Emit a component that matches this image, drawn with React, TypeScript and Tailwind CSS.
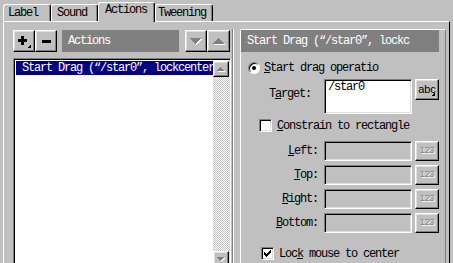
import React from "react";

const raised =
  "bg-[#c0c0c0] border border-t-white border-l-white border-r-black border-b-black shadow-[inset_-1px_-1px_0_#808080,inset_1px_1px_0_#dfdfdf]";
const sunken =
  "border border-t-[#808080] border-l-[#808080] border-r-white border-b-white shadow-[inset_1px_1px_0_#000,inset_-1px_-1px_0_#dfdfdf]";

function Tab({ label, className, active }: { label: string; className: string; active?: boolean }) {
  return (
    <div
      className={`relative bg-[#c0c0c0] border-t border-l border-r border-t-white border-l-white border-r-black rounded-t-[3px] shadow-[inset_-1px_0_0_#808080] leading-[13px] ${className} ${
        active ? "z-10 -mb-px h-[20px] pt-[1px]" : "h-[17px] pt-[2px]"
      }`}
    >
      {label}
    </div>
  );
}

function Arrow({ up, small }: { up?: boolean; small?: boolean }) {
  const w = small ? 7 : 11;
  const h = small ? 4 : 6;
  const d = up ? `M0 ${h}h${w}L${w / 2} 0z` : `M0 0h${w}L${w / 2} ${h}z`;
  return (
    <svg width={w + 1} height={h + 1} shapeRendering="crispEdges">
      <path d={d} fill="#fff" transform="translate(1,1)" />
      <path d={d} fill="#808080" />
    </svg>
  );
}

function Corner() {
  return (
    <svg width="4" height="4" className="absolute bottom-[3px] right-[3px]" shapeRendering="crispEdges">
      <path d="M4 0v4H0z" fill="#000" />
    </svg>
  );
}

function Check({ checked }: { checked?: boolean }) {
  return (
    <div className={`w-[13px] h-[13px] bg-white ${sunken} flex items-center justify-center shrink-0`}>
      {checked && (
        <svg width="7" height="7" shapeRendering="crispEdges">
          <path d="M0 2h1v1h1v1h1V3h1V2h1V1h1V0h1v3H6v1H5v1H4v1H3v1H2V6H1V5H0z" fill="#000" />
        </svg>
      )}
    </div>
  );
}

function FieldRow({ label, u }: { label: string; u: string }) {
  return (
    <div className="flex items-center h-[20px]">
      <div className="w-[77px] text-right">
        <u>{u}</u>
        {label}:
      </div>
      <div className={`ml-[6px] w-[88px] h-[20px] bg-[#c0c0c0] ${sunken}`} />
      <div
        className={`ml-[3px] w-[24px] h-[20px] ${raised} flex items-center justify-center font-['Liberation_Sans',sans-serif] text-[9px] tracking-[-0.3px] text-[#808080] [text-shadow:1px_1px_0_#fff]`}
      >
        123
      </div>
    </div>
  );
}

export default function App() {
  return (
    <div className="w-[453px] h-[263px] overflow-hidden bg-[#c0c0c0] flex flex-col font-['Liberation_Mono',monospace] text-[12px] tracking-[-1.2px] text-black">
      <div className="flex items-end h-[21px] pl-[3px] shrink-0">
        <Tab label="Label" className="w-[48px] pl-[4px]" />
        <Tab label="Sound" className="w-[47px] pl-[5px]" />
        <Tab label="Actions" className="w-[57px] pl-[6px]" active />
        <Tab label="Tweening" className="w-[58px] pl-[2px]" />
      </div>

      <div className="ml-[3px] w-[447px] flex-1 flex border-t border-l border-r border-t-white border-l-white border-r-black pt-[8px] pl-[9px]">
        {/* left pane */}
        <div className="flex flex-col w-[218px] shrink-0">
          <div className="flex h-[22px]">
            <div className={`relative w-[22px] ${raised} flex items-center justify-center`}>
              <svg width="9" height="9" className="-ml-[3px] -mt-[1px]" shapeRendering="crispEdges">
                <path d="M3 0h3v3h3v3H6v3H3V6H0V3h3z" fill="#000" />
              </svg>
              <Corner />
            </div>
            <div className={`w-[22px] ${raised} flex items-center justify-center`}>
              <div className="w-[9px] h-[3px] bg-black" />
            </div>
            <div className="ml-[5px] w-[117px] bg-[#808080] text-white pl-[6px] flex items-center">Actions</div>
            <div className={`ml-[6px] w-[22px] ${raised} flex items-center justify-center`}>
              <Arrow />
            </div>
            <div className={`w-[23px] ${raised} flex items-center justify-center`}>
              <Arrow up />
            </div>
          </div>

          <div className={`mt-[6px] h-[212px] w-[218px] bg-white ${sunken} p-[2px] pr-[1px] flex`}>
            <div className="flex-1 min-w-0 overflow-hidden">
              <div className="h-[14px] bg-[#000080] text-white pl-[6px] leading-[14px] whitespace-nowrap">
                Start Drag (“/star0”, lockcenter
              </div>
            </div>
            <div className="w-[16px] flex flex-col shrink-0">
              <div className={`h-[16px] ${raised} flex items-center justify-center`}>
                <Arrow up small />
              </div>
              <div className="flex-1 bg-[image:conic-gradient(#fff_0_25%,#c0c0c0_0_50%,#fff_0_75%,#c0c0c0_0)] bg-[length:2px_2px]" />
              <div className={`h-[16px] ${raised} flex items-center justify-center`}>
                <Arrow small />
              </div>
            </div>
          </div>
        </div>

        {/* splitter groove */}
        <div className="ml-[1px] -mt-[1px] w-[2px] border-l border-l-[#808080] border-r border-r-white shrink-0" />

        {/* right pane */}
        <div className="ml-[6px] -mt-[1px] w-[206px] shrink-0 border-t border-l border-r border-t-white border-l-white border-r-[#808080] flex flex-col">
          <div className="h-[22px] w-[198px] bg-[#808080] text-white pl-[6px] flex items-center whitespace-nowrap">
            Start Drag (“/star0”, lockc
          </div>

          <div className="mt-[10px] h-[12px] pl-[7px] flex items-center">
            <div className="w-[12px] h-[12px] rounded-full bg-white border border-t-[#808080] border-l-[#808080] border-r-white border-b-white shadow-[inset_1px_1px_0_#000] flex items-center justify-center">
              <div className="w-[4px] h-[4px] rounded-full bg-black" />
            </div>
            <div className="ml-[4px]">
              <u>S</u>tart drag operatio
            </div>
          </div>

          <div className="mt-[5px] flex h-[35px]">
            <div className="w-[70px] text-right pt-[6px]">
              T<u>a</u>rget:
            </div>
            <div className={`ml-[13px] w-[88px] h-[35px] bg-white ${sunken} pl-[3px] pt-[1px] leading-[13px]`}>/star0</div>
            <div
              className={`relative ml-[3px] w-[24px] h-[21px] ${raised} flex items-center justify-center font-['Liberation_Sans',sans-serif] text-[11px] tracking-normal pb-[1px]`}
            >
              abc
              <Corner />
            </div>
          </div>

          <div className="mt-[5px] h-[13px] pl-[18px] flex items-center">
            <Check />
            <div className="ml-[5px]">
              <u>C</u>onstrain to rectangle
            </div>
          </div>

          <div className="mt-[9px] flex flex-col gap-[4px]">
            <FieldRow u="L" label="eft" />
            <FieldRow u="T" label="op" />
            <FieldRow u="R" label="ight" />
            <FieldRow u="B" label="ottom" />
          </div>

          <div className="mt-[14px] h-[13px] pl-[20px] flex items-center">
            <Check checked />
            <div className="ml-[5px]">
              Loc<u>k</u> mouse to center
            </div>
          </div>
        </div>
      </div>
    </div>
  );
}
